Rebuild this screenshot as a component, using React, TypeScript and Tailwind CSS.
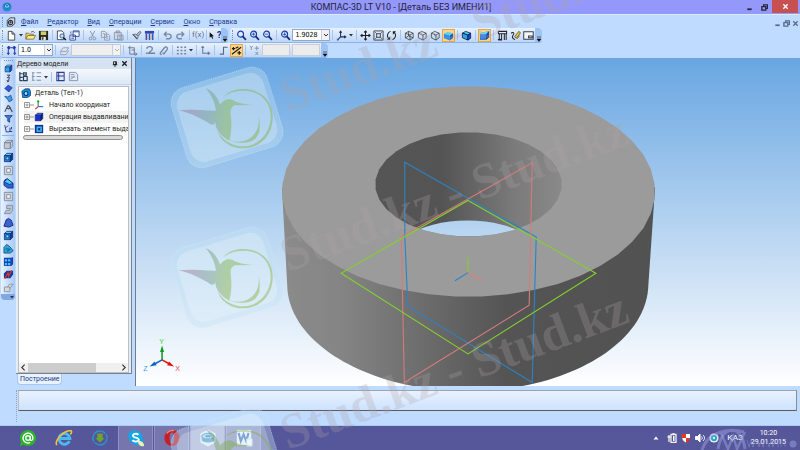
import { ReactNode } from "react";
import clsx from "clsx";

const menus = ["Файл", "Редактор", "Вид", "Операции", "Сервис", "Окно", "Справка"];

type IconName = keyof typeof icons;

const solid = (face: string, top: string, side: string) => (
  <g stroke="#10206a" strokeWidth="0.8" strokeLinejoin="round">
    <path d="M1.5 4 4 1.5h6.500L8 4z" fill={top} />
    <path d="M1.500 4H8v6.500H1.500z" fill={face} />
    <path d="M8 4l2.500-2.500V8L8 10.500z" fill={side} />
  </g>
);

const wireCube = (extra?: ReactNode) => (
  <g fill="none" stroke="#333" strokeWidth="0.8" strokeLinejoin="round">
    <path d="M1.500 3.500 5 1.500l5 2v5L6.500 11l-5-2.500zM1.500 3.500l5 2 3.500-2M6.500 5.500V11" />
    {extra}
  </g>
);

const lens = (mark?: ReactNode) => (
  <g fill="none" stroke="#1b3fa8" strokeWidth="1.300">
    <circle cx="5" cy="4.500" r="3.200" fill="#dcecff" />
    <path d="M7.400 7l3.400 3.800" stroke="#14257d" strokeWidth="1.800" />
    <g strokeWidth="0.900">{mark}</g>
  </g>
);

const icons = {
  doc: <path d="M2.500 1.500h4l3 3v6.500h-7zM6.500 1.500v3h3" fill="#fff" stroke="#333" strokeWidth="0.900" />,
  open: (
    <g stroke="#5c4a10" strokeWidth="0.700">
      <path d="M1 10V3.500h3l1 1h4V6" fill="#f2d767" />
      <path d="M1 10l2-4h8.500l-2.200 4z" fill="#fbe98b" />
      <path d="M6.500 2.500c1.500-1.500 3-1 4 .5" fill="none" stroke="#222" />
    </g>
  ),
  save: (
    <g>
      <path d="M1 1h10v10H1z" fill="#23281c" />
      <path d="M3 1.500h6v4H3z" fill="#c9cf6a" />
      <path d="M3.500 7.500h5V11h-5z" fill="#eee" />
      <path d="M4.500 8h1.500v2.500H4.500z" fill="#222" />
    </g>
  ),
  preview: (
    <g strokeWidth="0.900">
      <path d="M1.500 1h5l2 2v7.500h-7z" fill="#fff" stroke="#333" />
      <circle cx="6.500" cy="6.500" r="2.300" fill="#bfe0f5" stroke="#1b4da0" />
      <path d="M8 8.200 10.800 11" stroke="#111" strokeWidth="1.500" />
    </g>
  ),
  props: (
    <g fill="#fff" stroke="#223a80" strokeWidth="0.900">
      <path d="M4.500 1h6.500v6H4.500zM1 5.500h6V11H1z" />
      <path d="M4.500 2h6.500M2.500 7.500h3M2.500 9.200h3M2 1.500v2.500" stroke="#2a50bb" />
    </g>
  ),
  cut: (
    <g fill="none" stroke="#8593ab" strokeWidth="1">
      <path d="M3.500 1 7 7.500M8.500 1 5 7.500" />
      <circle cx="3.900" cy="9.300" r="1.500" />
      <circle cx="8.100" cy="9.300" r="1.500" />
    </g>
  ),
  copy: <path d="M1.500 1.500h4l1.500 1.500v5H1.500zM5 4.500h4l1.500 1.500v5H5zM3 4h2M6.500 7h2.500M6.500 9h2.500" fill="#dce5f2" stroke="#8593ab" strokeWidth="0.900" />,
  paste: <path d="M1.500 2.500h7.500v8H1.500zM3.500 1h3.500v2H3.500zM5 5.500h6v5.500H5zM6.500 7h3M6.500 9h3" fill="#cfd8e6" stroke="#8593ab" strokeWidth="0.900" />,
  brush: (
    <g stroke="#51606e" strokeWidth="0.900">
      <path d="M6 5 9.500 1.500l1.500 1L8 6.500z" fill="#b8c4cc" />
      <path d="M2 5l3-.5L8 7.500 6.500 10z" fill="#e6eaec" />
      <path d="M2 5l4.500 5M3 4.800l4 4.500" />
    </g>
  ),
  table: (
    <g>
      <path d="M1 1h10v3H1z" fill="#2b49b5" />
      <path d="M2.500 4v7M6 4v7M9.500 4v7" stroke="#3156c4" strokeWidth="1.600" />
      <path d="M4 5v5.500M8 5v5.500" stroke="#f0a35c" />
    </g>
  ),
  undo: <path d="M2.500 4.500h5a2.500 2.500 0 1 1 0 5H4.500M5 2 2.500 4.500 5 7" fill="none" stroke="#7789a6" strokeWidth="1.500" />,
  redo: <path d="M9.500 4.500h-5a2.500 2.500 0 1 0 0 5H7.500M7 2l2.500 2.500L7 7" fill="none" stroke="#7789a6" strokeWidth="1.500" />,
  help: <path d="M1 1v8.500l2.200-2L4.800 11l1.500-.6-1.500-3.300h2.700z" fill="#111" />,
  zoom: lens(),
  zoomIn: lens(<path d="M3.300 4.500h3.400M5 2.800v3.400" />),
  zoomOut: lens(<path d="M3.300 4.500h3.400" />),
  zoomScale: lens(<path d="M4.300 3.500 5.200 3v3.200M3.500 5h3" />),
  axes: (
    <g fill="none" stroke="#1d2b50" strokeWidth="1.100">
      <path d="M5 1.500v6h5.500M5 7.500 2 10.500M3.800 3 5 1.300 6.200 3M9 6.300l1.700 1.200L9 8.700" />
      <path d="M1.500 9.500v1.500H3" stroke="#2b62d0" />
    </g>
  ),
  move: <path d="M6 1v10M1 6h10M4.600 2.600 6 1l1.400 1.600M4.600 9.400 6 11l1.400-1.600M2.600 4.600 1 6l1.600 1.400M9.400 4.600 11 6 9.400 7.400" fill="none" stroke="#1b1b1b" strokeWidth="1.100" />,
  fit: <path d="M1 1h10v10H1zM4 4h4v4H4zM2.500 2.500 4 4M9.500 2.500 8 4M2.500 9.500 4 8M9.500 9.500 8 8" fill="none" stroke="#2e2e2e" strokeWidth="0.900" />,
  rotate: <path d="M5 1.500C2 2.500 1 5.500 2 8l1.500 2M7 10.500C10 9.500 11 6.500 10 4L8.500 2M1.500 10h2.500V7.500M10.500 2H8v2.500" fill="none" stroke="#1b1b1b" strokeWidth="1.100" />,
  wire: wireCube(<path d="M5 1.500v5l5 2M5 6.500 1.500 8.500" />),
  hiddenThin: wireCube(<path d="M5 1.500v5" stroke="#aaa" />),
  hidden: wireCube(<path d="M5 1.500v5l5 2M5 6.500 1.500 8.500" stroke="#8a8a8a" strokeDasharray="1 1" />),
  shaded: (
    <g>
      <path d="M1 4 5 2l6 1.500L7.500 6z" fill="#58d3f3" />
      <path d="M1 4l6.500 2v5.500L1 9z" fill="#3291ea" />
      <path d="M7.500 6 11 3.500v5L7.500 11.500z" fill="#1653c2" />
    </g>
  ),
  shadedWire: (
    <g stroke="#0b1a55" strokeWidth="0.900" strokeLinejoin="round">
      <path d="M1.500 3.500 5 1.500l5.500 2-3 2z" fill="#4fd0ec" />
      <path d="M1.500 3.500l6 2V11l-6-2.500z" fill="#2ea5e8" />
      <path d="M7.500 5.500l3-2V9l-3 2z" fill="#1b48c8" />
    </g>
  ),
  perspective: (
    <g>
      <path d="M1 3.500 11 1v7L7 11H1z" fill="#2f7fe4" />
      <path d="M1 3.500 11 1 8 4.500H1z" fill="#65d6f5" />
      <path d="M8 4.500 11 1v7L7.500 11z" fill="#1545ad" />
    </g>
  ),
  section: (
    <g fill="none" stroke="#22262c" strokeWidth="1.100">
      <path d="M1.500 1.500h9V4h-9zM2.500 4v6.500H5V4M8 4v7M10 4v7" />
      <path d="M1 10.500h4.500" strokeWidth="1.500" />
    </g>
  ),
  pencil: (
    <g>
      <path d="M5 7.500 9.500 1.500l2 1.500L7 9z" fill="#e2cf36" stroke="#2c2c14" strokeWidth="0.700" />
      <path d="M1 3.500c3-2 4 0 2.500 2S2 9 5.500 10.500" fill="none" stroke="#222" strokeWidth="1.100" />
      <path d="M8 9.500 10.500 6" stroke="#c33" />
    </g>
  ),
  frame: <path d="M0.800 2h10.400v8H0.800zM6 6.500h4v2H6z" fill="#f4f7fa" stroke="#3a4048" strokeWidth="1.100" />,
  dims: <path d="M2.500 1v10M9.500 1v10M1 3h10M1 9h3M8 9h3M4 1.500 2.500 3 4 4.500M8 1.500 9.500 3 8 4.500" fill="none" stroke="#2439b0" strokeWidth="1.100" />,
  layers: <path d="M1.500 7 4.500 3h6L8 7zM1.500 9.500 2 8M1.500 10.500h6L10.500 6" fill="#dde5ee" stroke="#93a0b3" strokeWidth="1" />,
  crop: <path d="M3 1v9h8M1 3h7v8M5 5.500h3M9 8.500l2 1.500-2 1.500" fill="none" stroke="#68778f" strokeWidth="1" />,
  magnet: <path d="M2 4c0-3 6-3 6 0S4 7 4 9h7M1 9h2" fill="none" stroke="#73829c" strokeWidth="1.400" />,
  magnetTwo: <path d="M2 9.500 7 3c2-2 4 0 3 2L6.500 9.500M2 9.500l2 1.200M5 8.500l2 1.500" fill="none" stroke="#73829c" strokeWidth="1.400" />,
  grid: <path d="M1 2.500h10M1 6h10M1 9.500h10" fill="none" stroke="#73829c" strokeWidth="1.500" strokeDasharray="2 2" />,
  corner: <path d="M3 1.500V9h7M1.500 3 3 1.500 4.500 3M8.500 7.500 10.500 9 8.500 10.500" fill="none" stroke="#68778f" strokeWidth="1.100" />,
  ortho: <path d="M2 10h4V2.500h4.500" fill="none" stroke="#5b6a84" strokeWidth="1.200" />,
  round: (
    <g fill="none" stroke="#1c1a12" strokeWidth="1.300">
      <path d="M1 4h3.500M2.700 2.200v3.600M1 10 11 2.500M7 8.500h4M9 6.500v4M5 3.500 8 2" />
    </g>
  ),
  coords: <path d="M1 1l1.500 2L4 1M2.500 3v2.500M8.500 1v5M6 3.500h5M7 7.500l3 3.500M10 7.500 7 11" fill="none" stroke="#7b879b" strokeWidth="0.900" />,
  sketch: <path d="M4 1.500h4L4.500 5h3L5 10M4 8l1 2.500L7 9" fill="none" stroke="#27324a" strokeWidth="1.100" />,
  plane: <path d="M1 6 5.500 1.500 11 5 6.500 10.500z" fill="#3057cf" stroke="#14246f" strokeWidth="0.800" />,
  surface: <path d="M1 3l4 1 4-2.500L11 8 7 10.500 5 7.500z" fill="#3c9fe3" stroke="#153d88" strokeWidth="0.900" />,
  angle: <path d="M1 10.500 5 2.500h1.500l4.500 8M3 5 6 6.500 9 4.500" fill="none" stroke="#3f4650" strokeWidth="1.400" />,
  filter: <path d="M1 2h10L7.500 6v5L5 9.500V6z" fill="#3b78d6" stroke="#1a2d6d" strokeWidth="0.900" />,
  measure: <path d="M1 1.500 3 10.500H6.500M2.500 5l3-3M8 5v5M6.500 10h4.500M10 4v3" fill="none" stroke="#20377e" strokeWidth="1.200" />,
  solidBlue: solid("#1c2fd0", "#2f6fe6", "#101c80"),
  solidLight: solid("#2aa7ea", "#5bd9f2", "#1a56c8"),
  solidGray: solid("#b4bcc8", "#dfe3ea", "#8d97a6"),
  holeBlue: (
    <g>
      {solid("#1c8ee0", "#4bd5ef", "#123ba8")}
      <path d="M3.300 5.500h3v3h-3z" fill="#7deaf8" stroke="#0c2066" strokeWidth="0.700" />
    </g>
  ),
  holeFlat: (
    <g>
      <path d="M1 1h10v10H1z" fill="#1230a0" />
      <path d="M3 3h6.500v6.500H3z" fill="#35b6ea" />
      <path d="M5 5h2.500v2.500H5z" fill="#0c2066" />
    </g>
  ),
  boxGray: (
    <g fill="#c3c9d3" stroke="#7d8796" strokeWidth="0.900">
      <path d="M1.500 4 4 1.500h6.500L8 4zM1.500 4H8v6.500H1.500zM8 4l2.500-2.500V8L8 10.500z" />
    </g>
  ),
  holeGray: (
    <g stroke="#7d8796" strokeWidth="0.900">
      <path d="M1.500 1.500h9v9h-9z" fill="#cdd3dc" />
      <path d="M4 4h4v4H4z" fill="#f1f3f6" />
    </g>
  ),
  shellGray: <path d="M4 1.500h6.500V7L8 10.500H1.500L3.500 7H7L8 5H4z" fill="#bcc3ce" stroke="#7d8796" strokeWidth="0.900" />,
  fillet: (
    <g stroke="#10206a" strokeWidth="0.800">
      <path d="M1 5c0-3 2-4 4-4l6 5v5H5L1 8z" fill="#2f60dd" />
      <path d="M5 1l6 5-4 1-6-3z" fill="#3fd2ec" />
    </g>
  ),
  draft: <path d="M1 10 3.500 3 6 1.500 9 3.500 11 9 6.500 11z" fill="#3c62cf" stroke="#10206a" strokeWidth="0.900" />,
  rib: (
    <g stroke="#10356a" strokeWidth="0.800">
      <path d="M1 5 4 1.500 7.500 4 11 8.500 8 11H1z" fill="#28a8dc" />
      <path d="M3 6.500h4M4 9l4-2" />
    </g>
  ),
  array: (
    <g>
      <path d="M1 2h8l2-1v8l-2 2H1z" fill="#1b3fb4" />
      <path d="M2 3.500h2.500V6H2zM5.500 3.500H8V6H5.500zM2 7.500h2.500V10H2zM5.500 7.500H8V10H5.500z" fill="#39c7ee" />
    </g>
  ),
  mirror: (
    <g>
      <path d="M1 5 4 2h7v4L8 10H1z" fill="#17369e" />
      <path d="M2 10.500 5.500 4 6 8 9.500 1.500" fill="none" stroke="#e23520" strokeWidth="1.300" />
    </g>
  ),
  gray: <path d="M1.500 5.500h6v5h-6zM5 5.500 7 2.500h4L7.500 7" fill="#d4d9e1" stroke="#8a94a3" strokeWidth="1" />,
  tree: <path d="M2 1v9.500M2 3h3M2 7h3M2 10.500h3M6 2h3v2.500H6zM6 6h4v4.500H6z" fill="none" stroke="#27405a" strokeWidth="1.300" />,
  list: <path d="M1 2h3M1 6h3M1 10h3M6 2h5M6 6h5M6 10h5M2 2v8" fill="none" stroke="#7f93b4" strokeWidth="1.100" />,
  book: <path d="M2 1.500h8v9H2zM2 5.500h8M4 1.500v9" fill="#dfe8fb" stroke="#2c3f95" strokeWidth="1.100" />,
  fxPage: <path d="M1.500 1.500h7L10.500 4v6.500h-9zM3 4h4M3 6.500h5M3 9l4-3" fill="#e6ebf4" stroke="#7f93b4" strokeWidth="1" />,
  part: (
    <g>
      <path d="M1 4 5 1h5l1.500 3v5L8 11.500H2z" fill="#148fd6" stroke="#0b2f76" strokeWidth="0.900" />
      <circle cx="6" cy="6.500" r="2.400" fill="#7ceaf5" stroke="#0b2f76" strokeWidth="1.300" />
    </g>
  ),
  origin: (
    <g fill="none" strokeWidth="1.300">
      <path d="M5 1v7" stroke="#1e9a3a" />
      <path d="M5 8 1.500 11" stroke="#e22" />
      <path d="M5 8h6" stroke="#2b66d8" />
      <path d="M3.800 2.500 5 1l1.200 1.500" stroke="#1e9a3a" />
    </g>
  ),
  gear: (
    <g fill="none" stroke="#2d3440">
      <path d="M1.500 4 5 1h5.500v7L7 11H1.500z" fill="#d9dde2" strokeWidth="1" />
      <circle cx="5.500" cy="6.500" r="2.500" strokeWidth="1.300" />
      <circle cx="5.500" cy="6.500" r="0.800" fill="#2d3440" />
    </g>
  ),
};

const Icon = ({ name, className = "size-[11px]" }: { name: IconName; className?: string }) => (
  <svg viewBox="0 0 12 12" className={clsx("shrink-0", className)} aria-hidden="true">
    {icons[name]}
  </svg>
);

const Tool = ({ name, label, active }: { name: IconName; label: string; active?: boolean }) => (
  <button
    type="button"
    aria-label={label}
    className={clsx("flex h-[13px] w-[13px] shrink-0 items-center justify-center", active && "border border-[#e3a64b] bg-[#ffd48a]")}
  >
    <Icon name={name} />
  </button>
);

const Sep = () => <span className="mx-[2px] h-[10px] w-px shrink-0 bg-[#a3c4f0]" />;
const Grip = () => <span className="mx-[2px] h-[10px] shrink-0 border-l border-dotted border-[#6b93cc]" />;
const Caret = () => (
  <svg viewBox="0 0 6 6" className="size-[6px] shrink-0" aria-hidden="true">
    <path d="M1 2h4L3 4.500z" fill="#333" />
  </svg>
);
const Overflow = () => (
  <button type="button" aria-label="Параметры панели" className="flex h-full w-[7px] items-end justify-center rounded-r bg-[#9cc3f3]">
    <svg viewBox="0 0 6 6" className="size-[6px]" aria-hidden="true">
      <path d="M1 1h4M1 3h4L3 5.500z" stroke="#222" strokeWidth="0.600" />
    </svg>
  </button>
);

const Combo = ({ label, value, className, disabled }: { label: string; value: string; className: string; disabled?: boolean }) => (
  <span
    className={clsx(
      "relative flex h-[12px] shrink-0 items-center border",
      disabled ? "border-[#c3c9d2] bg-[#efefef]" : "border-[#8fa9cd] bg-white",
      className
    )}
  >
    <select
      aria-label={label}
      disabled={disabled}
      className="h-full w-full appearance-none pl-[2px] font-['DejaVu_Sans_Condensed',sans-serif] text-[7px] leading-[10px] text-black outline-none"
    >
      <option>{value}</option>
    </select>
    <span className="pointer-events-none absolute inset-y-0 right-0 flex w-[8px] items-center justify-center border-l border-[#c3cfe0] bg-[#f1f1f1]">
      <svg viewBox="0 0 6 6" className="size-[6px]" aria-hidden="true">
        <path d="M1 2l2 2 2-2" fill="none" stroke={disabled ? "#b5b5b5" : "#333"} />
      </svg>
    </span>
  </span>
);

const Bar = ({ children }: { children: ReactNode }) => (
  <div className="flex h-[14px] items-center rounded-[3px] bg-linear-to-b from-[#e9f2ff] to-[#bdd6f8] shadow-[0_1px_0_#8fb3e3]">{children}</div>
);

const leftTools: IconName[] = ["boxGray", "holeBlue", "holeGray", "fillet", "holeGray", "shellGray", "draft", "holeBlue", "rib", "array", "mirror", "gray"];
const sketchTools: IconName[] = ["solidLight", "sketch", "plane", "surface", "angle", "filter", "measure"];

const treeItems: { icon: IconName; text: string }[] = [
  { icon: "origin", text: "Начало координат" },
  { icon: "solidBlue", text: "Операция выдавливания" },
  { icon: "holeFlat", text: "Вырезать элемент выдав" },
];

const ring = (cx: number, cy: number, rx: number, ry: number, n: number) =>
  Array.from({ length: n }, (_, i) => {
    const a = ((i + 0.5) / n) * Math.PI * 2;
    return `${(cx + rx * Math.cos(a)).toFixed(1)},${(cy + ry * Math.sin(a)).toFixed(1)}`;
  }).join(" ");

const topFace = ring(468, 192, 186, 105, 44);
const hole = ring(468, 185, 93, 52, 32);

function Viewport() {
  return (
    <svg viewBox="135 59 665 327" preserveAspectRatio="xMidYMid slice" className="h-full w-full" role="img" aria-label="Деталь">
      <defs>
        <linearGradient id="sky" gradientUnits="userSpaceOnUse" x1="0" y1="59" x2="0" y2="386">
          <stop offset="0" stopColor="#68a6e2" />
          <stop offset="1" stopColor="#ffffff" />
        </linearGradient>
        <linearGradient id="outer" gradientUnits="userSpaceOnUse" x1="282" y1="0" x2="654" y2="0">
          <stop offset="0" stopColor="#8b8b8b" />
          <stop offset="0.15" stopColor="#858585" />
          <stop offset="0.4" stopColor="#6a6a6a" />
          <stop offset="0.6" stopColor="#545454" />
          <stop offset="1" stopColor="#525252" />
        </linearGradient>
        <linearGradient id="inner" gradientUnits="userSpaceOnUse" x1="375" y1="0" x2="561" y2="0">
          <stop offset="0" stopColor="#555" />
          <stop offset="0.36" stopColor="#545454" />
          <stop offset="0.75" stopColor="#7b7b7b" />
          <stop offset="1" stopColor="#898989" />
        </linearGradient>
        <clipPath id="holeClip">
          <polygon points={hole} />
        </clipPath>
      </defs>
      <rect x="135" y="59" width="665" height="327" fill="url(#sky)" />
      <path d="M282 188 L287.500 290 C292 345 370 391 467 391 C565 391 642 345 647 290 L654 188z" fill="url(#outer)" />
      <polygon points={topFace} fill="#9b9b9b" />
      <polygon points={hole} fill="url(#inner)" />
      <ellipse cx="467" cy="277" rx="90" ry="56" fill="url(#sky)" clipPath="url(#holeClip)" />
      <g fill="none" strokeWidth="1.100">
        <path d="M404.500 163v74l3 69.500L531.500 382.500l4-145z" stroke="#2b83c6" />
        <path d="M531.500 163.500 401 237l3 145.500L528.500 305.500z" stroke="#d37c7c" />
        <path d="M467.500 201 595 273.500 467.500 354 341 273.500z" stroke="#83d02d" />
        <path d="M467.500 273v-15.500" stroke="#83d02d" />
        <path d="M467.500 273l-13 8" stroke="#2b83c6" />
        <path d="M467.500 273l13.500 8" stroke="#e07c7c" />
      </g>
      <g strokeWidth="1.500">
        <path d="M162.500 360v-9" stroke="#0a9a1c" />
        <path d="M160.500 352l2-6.500 2 6.500z" fill="#0a9a1c" />
        <path d="M162.500 360l7 3.800" stroke="#e3130c" />
        <path d="M174.500 366.500l-7-1.300 2-3.700z" fill="#e3130c" />
        <path d="M162.500 360l-7 3.800" stroke="#0b63c4" />
        <path d="M150 366.500l7-1.300-2-3.700z" fill="#0b63c4" />
      </g>
      <g className="font-['Liberation_Sans',sans-serif] text-[7px]" textAnchor="middle">
        <text x="162" y="344" fill="#2fcf3c">Y</text>
        <text x="178" y="371" fill="#f04040">X</text>
        <text x="146" y="371" fill="#3f9bea">Z</text>
      </g>
    </svg>
  );
}

const Bird = () => (
  <g>
    <g transform="rotate(-17 226.700 117.300)">
      <rect x="177" y="76" width="100" height="83" rx="16" fill="#c3e2f4" fillOpacity="0.38" stroke="#d9f2fb" strokeOpacity="0.5" strokeDasharray="1 1" />
      <rect x="182" y="81" width="90" height="73" rx="14" fill="#ffffff" fillOpacity="0.22" />
    </g>
    <g transform="translate(160 60) scale(0.3333)" fill="url(#bird)" opacity="0.42">
      <path d="M137 85C160 92 176 118 180 134C190 120 204 114 218 120C228 128 250 133 280 135L224 136C212 142 210 152 213 170C216 200 213 222 208 242C188 232 166 212 166 186C164 194 158 196 150 192C130 178 90 158 55 151C95 146 140 152 168 152C166 130 152 100 137 85z" />
      <path d="M190 112C205 92 235 84 262 88C310 92 342 130 338 180C334 228 300 262 256 265C215 267 182 245 172 212C190 245 222 260 254 259C296 256 328 222 332 178C335 134 308 98 264 93C235 90 208 96 190 112z" />
      <path d="M198 236C230 252 262 246 280 226C296 206 298 190 296 168C302 196 300 212 290 226L300 206C298 222 288 234 280 240L292 230C278 248 244 258 198 236z" />
    </g>
  </g>
);

const wordmarks = [112, 272, 450];

// brand overlay drawn over the whole window
function Overlay() {
  return (
    <svg
      viewBox="0 0 800 450"
      preserveAspectRatio="xMinYMin slice"
      className="pointer-events-none absolute inset-0 h-full w-full overflow-hidden"
      aria-hidden="true"
    >
      <defs>
        <linearGradient id="bird" gradientUnits="userSpaceOnUse" x1="55" y1="0" x2="200" y2="0">
          <stop offset="0" stopColor="#b05a90" />
          <stop offset="0.6" stopColor="#6d8f86" />
          <stop offset="1" stopColor="#7cae34" />
        </linearGradient>
      </defs>
      <g className="font-['Liberation_Serif',serif] text-[50px] font-bold" fill="#aea2a6" fillOpacity="0.27">
        {wordmarks.map((y) => (
          <text key={y} transform={`translate(288 ${y}) rotate(-20.500)`}>
            Stud.kz - Stud.kz
          </text>
        ))}
      </g>
      <Bird />
      <g transform="translate(0 160)">
        <Bird />
      </g>
      <g transform="translate(0 341)">
        <Bird />
      </g>
      <g fill="none" stroke="#9a9fe0" strokeOpacity="0.5">
        <path d="M702 450C706 436 722 427 744 432M718 449C722 424 742 424 745 449" strokeWidth="3" />
        <path d="M721 433l7 16 5-13 4 13 8-17" strokeWidth="2.500" />
        <path d="M747 440l2 7 2-6 2 6 2-7M757 440l2 7 2-6 2 6 2-7M767 440l2 7 2-6 2 6 2-7M778 439v8M781 439v8M785 439v8" strokeOpacity="0.4" />
      </g>
      <circle cx="793" cy="444" r="3.500" fill="#9a9fe0" fillOpacity="0.5" />
    </svg>
  );
}

const TaskButton = ({ label, open, active, children }: { label: string; open?: boolean; active?: boolean; children: ReactNode }) => (
  <button
    type="button"
    aria-label={label}
    className={clsx(
      "flex h-full w-[35px] items-center justify-center",
      open && "border-x border-[#8f8fc4] bg-[#7676ad]",
      active && "bg-[#a9a9d0]"
    )}
  >
    <svg viewBox="0 0 20 20" className="size-[18px]" aria-hidden="true">
      {children}
    </svg>
  </button>
);

const WindowGlyph = ({ kind, className }: { kind: "min" | "max" | "close"; className?: string }) => (
  <svg viewBox="0 0 8 8" className={clsx("size-[7px]", className)} fill="none" stroke="currentColor" strokeWidth="1.500" aria-hidden="true">
    {kind === "min" && <path d="M1.500 6h5" strokeWidth="2" />}
    {kind === "max" && <path d="M1 3h4.500v4H1zM3 3V1h4.500v4H5.500" />}
    {kind === "close" && <path d="M1.500 1.500l5 5M6.500 1.500l-5 5" />}
  </svg>
);

export default function App() {
  return (
    <div className="relative flex h-screen flex-col overflow-hidden bg-[#bfdbff] font-[Roboto,sans-serif] text-[8px] leading-[10px] text-[#1c1c1c]">
      <header className="flex h-[14px] shrink-0 items-center bg-[#9498fb]">
        <div className="flex-1 pl-[2px]">
          <svg viewBox="0 0 12 12" className="size-[10px]" aria-hidden="true">
            <circle cx="6" cy="6" r="5.500" fill="#1f8ed0" />
            <path d="M3 3l3-1.500L9 3v3L6 8 3 6zM6 4.500V8M3 3l3 1.500L9 3" fill="#9be1f7" stroke="#0d5c9c" strokeWidth="0.800" />
          </svg>
        </div>
        <h1 className="text-[9px] leading-[12px] text-[#22223a]">КОМПАС-3D LT V10 - [Деталь БЕЗ ИМЕНИ1]</h1>
        <div className="flex h-full flex-1 justify-end text-[#26263c]">
          <button type="button" aria-label="Свернуть" className="w-[15px]">
            <WindowGlyph kind="min" className="mx-auto" />
          </button>
          <button type="button" aria-label="Развернуть" className="w-[15px]">
            <WindowGlyph kind="max" className="mx-auto" />
          </button>
          <button type="button" aria-label="Закрыть" className="mr-[2px] mb-px w-[26px] bg-[#c75050] text-white">
            <WindowGlyph kind="close" className="mx-auto" />
          </button>
        </div>
      </header>

      <nav className="flex h-[14px] shrink-0 items-center border-t border-[#d9ebff] text-[#22398c]">
        <Grip />
        <Icon name="gear" className="mr-[5px] ml-px size-[10px]" />
        <div className="flex flex-1 gap-[9px] text-[7px]">
          {menus.map((item) => (
            <button key={item} type="button">
              <span className="underline">{item[0]}</span>
              {item.slice(1)}
            </button>
          ))}
        </div>
        <div className="flex gap-[2px] pr-px pt-[3px] text-[#5a6c8a]">
          <button type="button" aria-label="Свернуть деталь">
            <WindowGlyph kind="min" />
          </button>
          <button type="button" aria-label="Восстановить деталь">
            <WindowGlyph kind="max" />
          </button>
          <button type="button" aria-label="Закрыть деталь">
            <WindowGlyph kind="close" />
          </button>
        </div>
      </nav>

      <div className="flex h-[15px] shrink-0 gap-[2px]">
        <Bar>
          <Grip />
          <Tool name="doc" label="Создать" />
          <Caret />
          <Tool name="open" label="Открыть" />
          <Tool name="save" label="Сохранить" />
          <Sep />
          <Tool name="preview" label="Просмотр" />
          <Tool name="props" label="Свойства" />
          <Sep />
          <Tool name="cut" label="Вырезать" />
          <Tool name="copy" label="Копировать" />
          <Tool name="paste" label="Вставить" />
          <Sep />
          <Tool name="brush" label="Копировать свойства" />
          <Tool name="table" label="Таблица" />
          <Sep />
          <Tool name="undo" label="Отменить" />
          <Tool name="redo" label="Повторить" />
          <Sep />
          <button type="button" className="w-[12px] text-[8px] text-[#5c6f92]">
            f(x)
          </button>
          <Sep />
          <button type="button" aria-label="Справка" className="flex items-center text-[9px] font-bold text-[#1b2c8e]">
            <Icon name="help" className="h-[11px] w-[8px]" />?
          </button>
          <Overflow />
        </Bar>
        <Bar>
          <Grip />
          <Tool name="zoom" label="Увеличить рамкой" />
          <Tool name="zoomIn" label="Увеличить" />
          <Tool name="zoomOut" label="Уменьшить" />
          <Sep />
          <Tool name="zoomScale" label="Масштаб" />
          <Combo label="Текущий масштаб" value="1.9028" className="w-[38px]" />
          <Sep />
          <Tool name="axes" label="Ориентация" />
          <Caret />
          <Sep />
          <Tool name="move" label="Сдвинуть" />
          <Tool name="fit" label="Показать все" />
          <Tool name="rotate" label="Повернуть" />
          <Sep />
          <Tool name="wire" label="Каркас" />
          <Tool name="hiddenThin" label="Без невидимых линий" />
          <Tool name="hidden" label="Невидимые линии тонкие" />
          <Tool name="shaded" label="Полутоновое" active />
          <Sep />
          <Tool name="shadedWire" label="Полутоновое с каркасом" />
          <Sep />
          <Tool name="perspective" label="Перспектива" active />
          <Sep />
          <Tool name="section" label="Сечение" />
          <Tool name="pencil" label="Перестроить" />
          <Tool name="frame" label="Упрощения" />
          <Overflow />
        </Bar>
      </div>

      <div className="flex h-[15px] shrink-0">
        <Bar>
          <Grip />
          <Tool name="dims" label="Шаг курсора" />
          <Combo label="Шаг" value="1.0" className="w-[35px]" />
          <Sep />
          <Tool name="layers" label="Слои" />
          <Combo label="Слой" value="" className="w-[50px]" disabled />
          <Sep />
          <Tool name="crop" label="Локальная система" />
          <Sep />
          <Tool name="magnet" label="Привязки" />
          <Tool name="magnetTwo" label="Запретить привязки" />
          <Sep />
          <Tool name="grid" label="Сетка" />
          <Caret />
          <Sep />
          <Tool name="corner" label="Система координат" />
          <Sep />
          <Tool name="ortho" label="Ортогонально" />
          <Tool name="round" label="Округление" active />
          <Sep />
          <Tool name="coords" label="Координаты" />
          <input aria-label="Координата X" disabled className="mr-[2px] ml-px h-[12px] w-[28px] border border-[#c9ced6] bg-[#ececec]" />
          <input aria-label="Координата Y" disabled className="mr-px h-[12px] w-[28px] border border-[#c9ced6] bg-[#ececec]" />
          <Overflow />
        </Bar>
      </div>

      <main className="flex min-h-0 flex-1">
        <aside className="flex w-[16px] shrink-0 flex-col items-center">
          <div className="flex w-[14px] flex-col items-center rounded bg-linear-to-r from-[#e9f2ff] to-[#a9c8f5] pt-[2px]">
            <span className="mb-[2px] w-[9px] border-t border-dotted border-[#6b93cc]" />
            {sketchTools.map((name) => (
              <button key={name} type="button" aria-label={name} className="flex h-[10px] items-center">
                <Icon name={name} className="size-[9px]" />
              </button>
            ))}
            <span className="my-[2px] w-[12px] border-t border-[#8fb3e3]" />
            {leftTools.map((name, i) => (
              <button key={i} type="button" aria-label={name} className="flex h-[13px] items-center">
                <Icon name={name} className="size-[11px]" />
              </button>
            ))}
            <span className="flex h-[6px] w-full items-center justify-end rounded-b bg-[#7fa8e4]">
              <Caret />
            </span>
          </div>
        </aside>

        <section className="flex w-[119px] shrink-0 flex-col pr-[3px]">
          <div className="flex min-h-0 flex-1 flex-col border-r border-b border-[#7a7f88] bg-[#e4ecf6]">
            <div className="flex h-[11px] items-center bg-[#d5e2f2] pr-[3px] pl-px text-[7px]">
              <h2 className="flex-1">Дерево модели</h2>
              <button type="button" aria-label="Закрепить">
                <svg viewBox="0 0 8 8" className="mr-[3px] size-[6px]" aria-hidden="true">
                  <path d="M2 1h4v3.500H2zM1 5h6M4 5v3M5 1v4" fill="none" stroke="#111" strokeWidth="1.100" />
                </svg>
              </button>
              <button type="button" aria-label="Закрыть дерево">
                <WindowGlyph kind="close" className="size-[6px]" />
              </button>
            </div>
            <div className="flex h-[16px] items-center border-b border-[#c5d5ea] bg-linear-to-b from-[#f4f8fd] to-[#dce8f6] pl-px">
              <Tool name="tree" label="Структура" />
              <Tool name="list" label="Состав" />
              <Caret />
              <Sep />
              <Tool name="book" label="Отношения" />
              <Tool name="fxPage" label="Дополнительно" />
            </div>
            <div className="mx-[2px] mt-px flex min-h-0 flex-1 flex-col border border-[#b9bec6] bg-white">
              <ul className="flex-1 overflow-hidden pl-[2px] text-[7px] leading-[12px] whitespace-nowrap">
                <li className="flex h-[12px] items-center gap-[4px]">
                  <Icon name="part" className="size-[10px]" />
                  Деталь (Тел-1)
                </li>
                {treeItems.map((item, i) => (
                  <li key={item.text} className={clsx("ml-[3px] flex h-[12px] items-center", i === 1 && "bg-[#f3f3f3]")}>
                    <svg viewBox="0 0 10 10" className="size-[10px] shrink-0" fill="none" stroke="#8b8b8b" aria-hidden="true">
                      <path d="M0.500 2.500h5v5h-5zM1.500 5h3M3 3.500v3M6 5h4" strokeWidth="0.900" />
                    </svg>
                    <Icon name={item.icon} className="mr-[5px] size-[10px]" />
                    {item.text}
                  </li>
                ))}
                <li className="mr-[5px] ml-[2px] h-[5px] rounded-full border border-[#8f8f8f] bg-[#d9d9d9]" aria-hidden="true" />
              </ul>
              <div className="flex h-[9px] shrink-0 items-center bg-[#f0f0f0] text-[#333]">
                <svg viewBox="0 0 8 8" className="size-[9px]" aria-hidden="true">
                  <path d="M5 1.500 2.500 4 5 6.500" fill="none" stroke="#333" />
                </svg>
                <span className="h-full w-[68px] bg-[#cdcdcd]" />
                <svg viewBox="0 0 8 8" className="ml-auto size-[9px]" aria-hidden="true">
                  <path d="M3 1.500 5.500 4 3 6.500" fill="none" stroke="#333" />
                </svg>
              </div>
            </div>
          </div>
          <div className="h-[12px]">
            <button type="button" className="ml-px rounded-b border border-t-0 border-[#a8c6ee] bg-[#e9f2ff] px-[2px] text-[7px] leading-[10px] text-[#22398c]">
              Построение
            </button>
          </div>
        </section>

        <section className="min-w-0 flex-1 overflow-hidden border-l border-[#6f7c8c]">
          <Viewport />
        </section>
      </main>

      <div className="flex h-[39px] shrink-0 items-start pt-[4px] pr-[3px] pl-[16px]">
        <span className="h-[32px] border-l border-dotted border-[#8aa6cf]" />
        <div className="ml-px h-[21px] flex-1 border border-t-[#9aa3ae] border-r-[#8c8c8c] border-b-[#5f5960] border-l-[#c9b9b9] bg-linear-to-b from-[#e8f2ff] to-[#cde2fd]" />
      </div>

      <footer className="flex h-[25px] shrink-0 items-center border-t border-[#a9cdf0] bg-[#56579a] pl-[10px] text-white">
        <div className="flex h-full gap-px">
          <TaskButton label="Агент">
            <path d="M10 1a9 9 0 1 1-5 16.500L1 19l1-5A9 9 0 0 1 10 1z" fill="#2bb32d" />
            <circle cx="10" cy="10" r="2.500" fill="none" stroke="#fff" strokeWidth="1.500" />
            <path d="M12.500 7.500v4c0 2 3 1.500 3-1.500a5.500 5.500 0 1 0-3 5" fill="none" stroke="#fff" strokeWidth="1.500" />
          </TaskButton>
          <TaskButton label="Internet Explorer">
            <path d="M16 13.500a6 6 0 1 1 .5-3H5" fill="none" stroke="#4cb9ee" strokeWidth="3.200" />
            <path d="M2 18C-1 13 10 1 18 2c1 1 0 3-1 4" fill="none" stroke="#f0c33c" strokeWidth="1.800" />
          </TaskButton>
          <TaskButton label="Загрузчик">
            <path d="M3 14a8.500 8.500 0 0 1 5-12M17 6a8.500 8.500 0 0 1-5 12M5 4a8 8 0 0 1 11 1M15 16a8 8 0 0 1-11-1" fill="none" stroke="#2d92cc" strokeWidth="1.500" />
            <path d="M7 5h6v5h2l-5 5-5-5h2z" fill="#6da52f" />
          </TaskButton>
          <TaskButton label="Skype" open>
            <circle cx="7" cy="7" r="5.500" fill="#12a5e8" />
            <circle cx="12" cy="12" r="6" fill="#12a5e8" />
            <circle cx="9.500" cy="9.500" r="7.500" fill="#12a5e8" />
            <path d="M12.800 6.500C11 4.500 6.500 5 6.500 7.500s6.500 1.500 6.500 4.200-5 3-7 .6" fill="none" stroke="#fff" strokeWidth="2" />
            <path d="M12 13c4 0 7 2 7 6-4 1-7-2-7-6z" fill="#e4f4b4" />
          </TaskButton>
          <TaskButton label="Opera" open>
            <ellipse cx="10" cy="10" rx="8.500" ry="9" fill="#c4202a" />
            <path d="M4 5c2-3 6-4 8-3" fill="none" stroke="#f08a80" strokeWidth="1.500" />
            <ellipse cx="10" cy="10" rx="2.600" ry="6.500" fill="#7676ad" />
          </TaskButton>
          <TaskButton label="КОМПАС-3D" open active>
            <path d="M10 0.500 18.500 5v10L10 19.500 1.500 15V5z" fill="#eaf5fb" />
            <path d="M3 8c0-4 14-4 14 0v4c0 4-14 4-14 0z" fill="#2f8fc9" />
            <ellipse cx="10" cy="8" rx="7" ry="3.200" fill="#8fd2f0" stroke="#1f70a8" strokeWidth="1" />
            <ellipse cx="10" cy="8" rx="3" ry="1.300" fill="#1f70a8" />
          </TaskButton>
          <TaskButton label="Word" open>
            <path d="M2 1h16v17H2z" fill="#f4f8fd" />
            <path d="M4 4.500l2.500 9L9.500 6l3 7.500L15 4.500" fill="none" stroke="#2358b4" strokeWidth="2.400" />
            <path d="M13 11h6v8h-6z" fill="#fff" stroke="#c9d6ea" />
          </TaskButton>
        </div>
        <div className="ml-auto flex items-center gap-[4px] pr-[14px]">
          <svg viewBox="0 0 6 6" className="mr-[4px] size-[6px]" aria-hidden="true">
            <path d="M0.500 4.500h5L3 1.500z" fill="#fff" />
          </svg>
          <svg viewBox="0 0 10 10" className="size-[10px]" aria-hidden="true">
            <path d="M4 1.500h5v8H4zM5.500 0.500h2M0.500 4h3M2 2v7" fill="none" stroke="#f0f0f0" strokeWidth="1.300" />
            <path d="M6 3h1.500v5H6z" fill="#fff" />
          </svg>
          <svg viewBox="0 0 10 10" className="size-[10px]" aria-hidden="true">
            <path d="M1 1h8v4c0 2-2 3.500-4 4.500C3 8.500 1 7 1 5z" fill="#e5391d" />
            <path d="M5 1h4v4H5zM1.200 5H5v4.500C3 8.500 1.500 7 1.200 5z" fill="#fff" />
          </svg>
          <svg viewBox="0 0 10 10" className="size-[10px]" fill="none" stroke="#fff" aria-hidden="true">
            <path d="M0.500 3.500h2l2.500-2.500v8L2.500 6.500h-2z" fill="#fff" />
            <path d="M6.500 3.500c1 1 1 2 0 3M8 2c2 2 2 4 0 6" />
          </svg>
          <svg viewBox="0 0 10 10" className="size-[10px]" aria-hidden="true">
            <circle cx="5" cy="5" r="4.600" fill="#e9eef3" />
            <circle cx="5" cy="5" r="3.100" fill="#22a7b8" />
            <circle cx="5" cy="5" r="1.200" fill="#c9f4f6" />
          </svg>
          <button type="button" className="mx-[4px] text-[8px]">
            ҚАЗ
          </button>
          <time className="text-center text-[7px] leading-[9px]">
            10:20
            <br />
            29.01.2015
          </time>
        </div>
      </footer>

      <Overlay />
    </div>
  );
}
